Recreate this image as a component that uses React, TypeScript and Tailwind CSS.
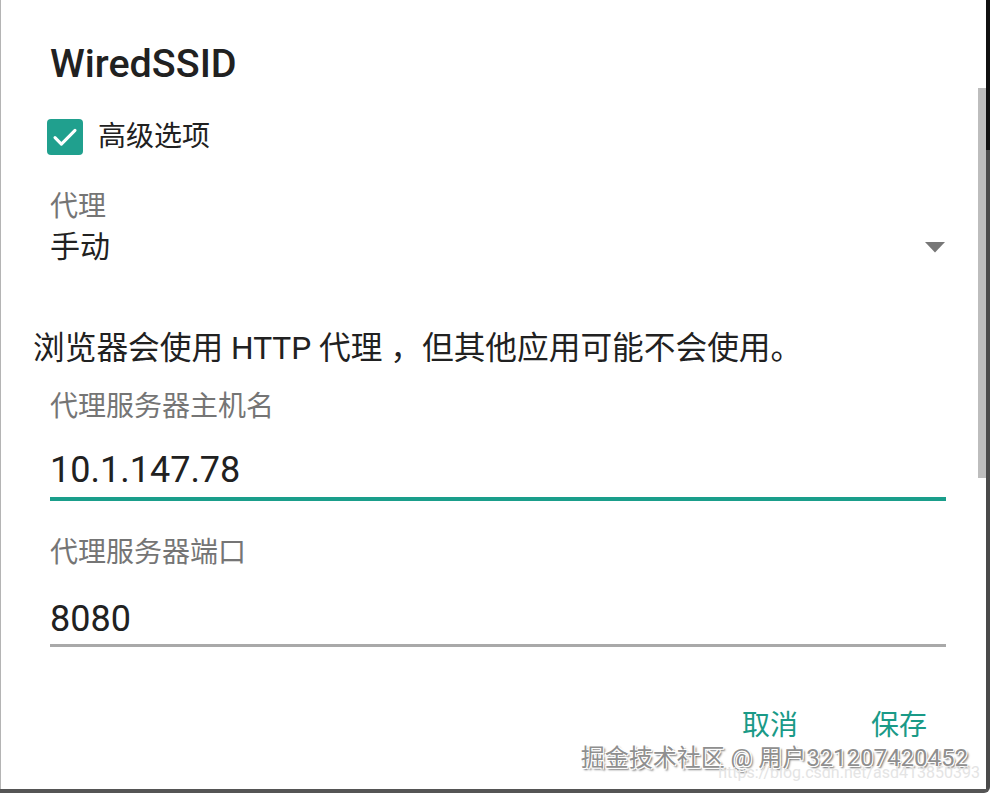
import React from "react";

const FONT = { fontFamily: 'Roboto, "Noto Sans CJK SC", "Noto Sans", sans-serif' };

export default function App() {
  return (
    <div
      className="relative w-[990px] h-[793px] bg-white overflow-hidden flex flex-col rounded-br-[6px]"
      style={FONT}
    >
      <div className="flex flex-1 min-h-0">
        <div className="w-px bg-[#b4b4b4]" />
        <div className="flex-1 flex flex-col pl-[49px] pr-[32px]">
          <div className="mt-[40px] h-[48px] flex items-center text-[39.5px] font-medium text-[#212121] leading-none">
            WiredSSID
          </div>

          <div className="mt-[31px] h-[36px] flex items-center -ml-[3px]">
            <div className="w-[36px] h-[36px] rounded-[4px] bg-[#20a08e] flex items-center justify-center">
              <svg width="32" height="32" viewBox="0 0 24 24" fill="none">
                <path d="M4.5 12.5l4.8 4.8L19.5 7" stroke="white" strokeWidth="2.3" strokeLinecap="round" strokeLinejoin="round" />
              </svg>
            </div>
            <span className="ml-[15px] text-[28px] text-[#212121] leading-none">高级选项</span>
          </div>

          <div className="mt-[38px] h-[28px] flex items-center text-[28px] text-[#757575] leading-none">代理</div>

          <div className="mt-[11px] h-[30px] flex items-center justify-between leading-none">
            <span className="text-[30px] text-[#212121]">手动</span>
            <svg width="20" height="11" viewBox="0 0 20 11" className="mr-[1px]">
              <polygon points="0,0 20,0 10,10.5" fill="#777777" />
            </svg>
          </div>

          <div className="mt-[71px] h-[32px] flex items-center -ml-[17px] text-[31.7px] text-[#212121] leading-none whitespace-nowrap">
            浏览器会使用 HTTP 代理 ，但其他应用可能不会使用。
          </div>

          <div className="mt-[28px] h-[28px] flex items-center text-[28px] text-[#757575] leading-none">代理服务器主机名</div>

          <div className="mt-[29px] h-[40px] flex items-center text-[36px] text-[#212121] leading-none">10.1.147.78</div>
          <div className="mt-[7px] h-[4px] bg-[#1a9e8b]" />

          <div className="mt-[38px] h-[28px] flex items-center text-[28px] text-[#757575] leading-none">代理服务器端口</div>

          <div className="mt-[32px] h-[40px] flex items-center text-[36px] text-[#212121] leading-none">8080</div>
          <div className="mt-[5px] h-[3px] bg-[#a9a9a9]" />

          <div className="mt-[65px] h-[28px] flex items-center justify-end gap-[73px] pr-[19px] text-[28px] text-[#1a9a87] leading-none">
            <span>取消</span>
            <span>保存</span>
          </div>
        </div>
        <div className="w-[8px] flex flex-col">
          <div className="mt-[88px] h-[390px] bg-[#bdbdbd]" />
        </div>
        <div className="w-[4px] flex flex-col">
          <div className="h-[150px] bg-[#111111]" />
          <div className="flex-1 bg-[#4a4a4a]" />
        </div>
      </div>
      <div className="h-[4px] bg-[#555555]" />

      <div className="absolute right-[22px] bottom-[23px] text-[24px] leading-none text-[#8f8f8f] whitespace-nowrap [text-shadow:1px_1px_0_#ffffff,-1px_-1px_0_#ffffff,1px_-1px_0_#ffffff,-1px_1px_0_#ffffff,2px_2px_2px_#666666]">
        掘金技术社区 @ 用户321207420452
      </div>
      <div className="absolute right-[10px] bottom-[12px] text-[16px] leading-none text-[#e4e4e4] whitespace-nowrap">
        https://blog.csdn.net/asd413850393
      </div>
    </div>
  );
}
